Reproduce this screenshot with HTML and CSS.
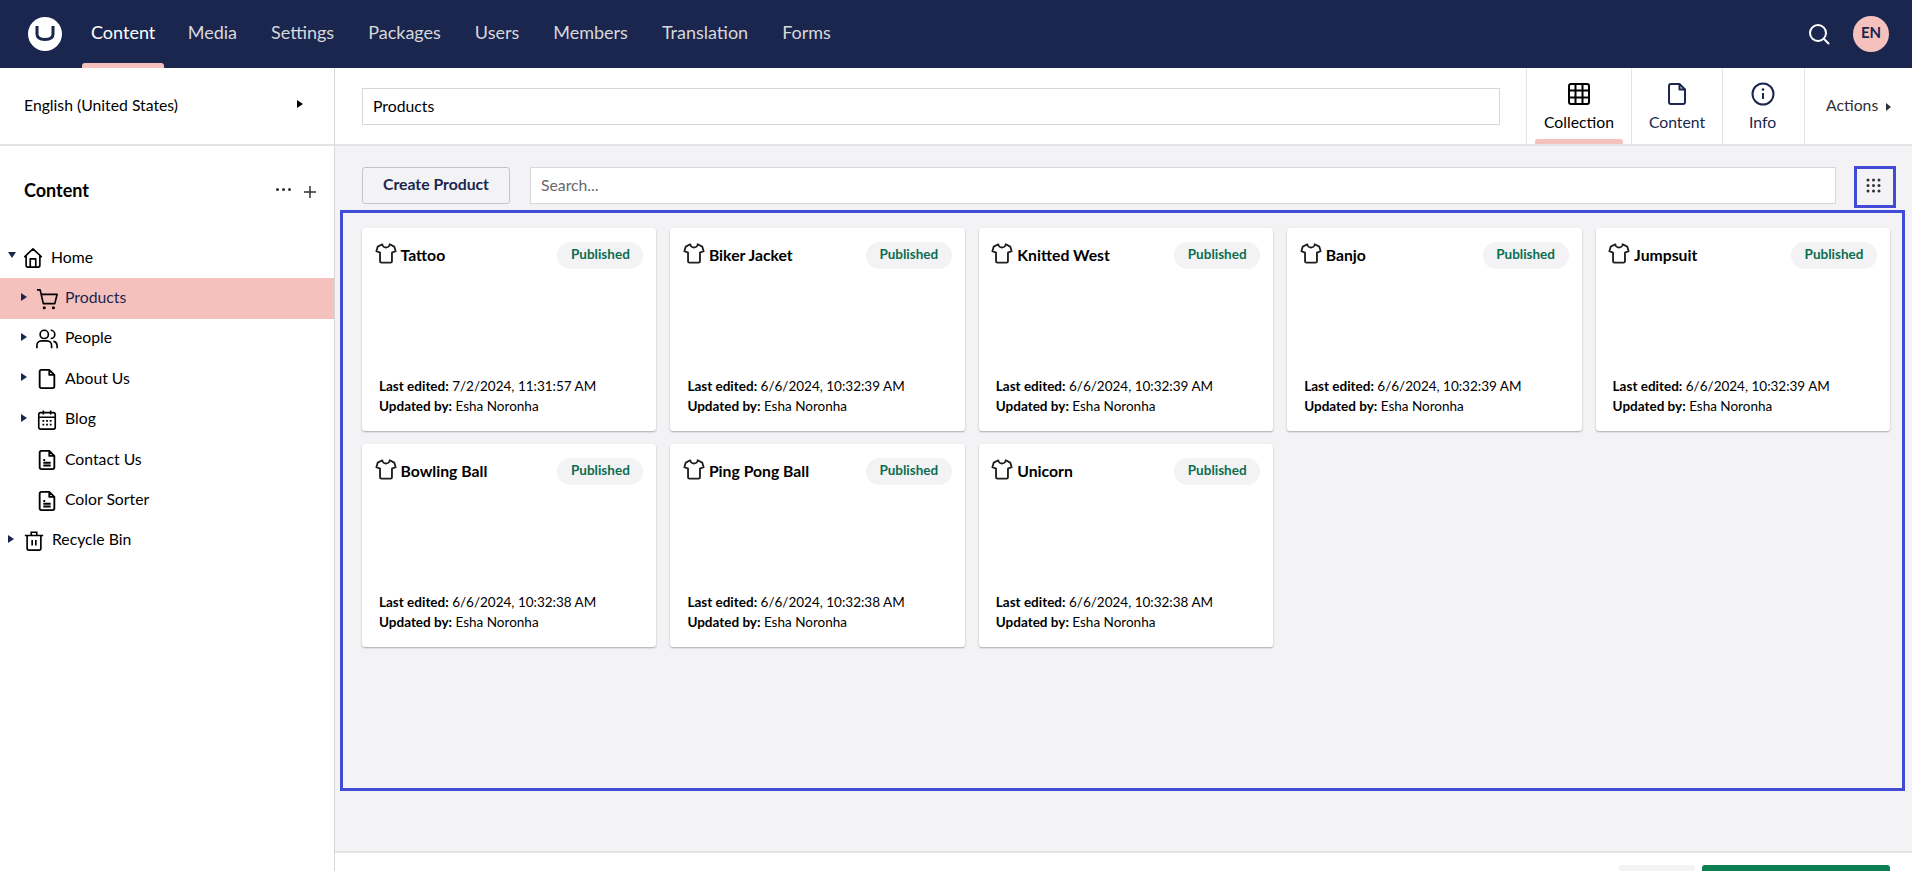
FILE: index.html
```html
<!DOCTYPE html>
<html>

  <head>
    <meta charset="UTF-8">
    <title>Content - Products</title>
    <link rel="stylesheet" href="styles.css">
  </head>

  <body>
    <svg class="defs" width="0" height="0">
      <symbol id="shirt" viewBox="0 0 24 24">
        <path d="M8 2.500 3 5 1.500 10l4 1.500V21a1.500 1.500 0 0 0 1.500 1.500h10a1.500 1.500 0 0 0 1.500-1.500v-9.500l4-1.500L21 5l-5-2.500c0 2-2 3.500-4 3.500S8 4.500 8 2.500Z" fill="none" stroke="currentColor" stroke-width="2" stroke-linejoin="round"/>
      </symbol>
      <symbol id="doc" viewBox="0 0 24 24">
        <path d="M14.500 2H6a2 2 0 0 0-2 2v16a2 2 0 0 0 2 2h12a2 2 0 0 0 2-2V7.500Z M14.500 2v5.500H20" fill="none" stroke="currentColor" stroke-width="2" stroke-linejoin="round"/>
      </symbol>
      <symbol id="doc-lines" viewBox="0 0 24 24">
        <path d="M14.500 2H6a2 2 0 0 0-2 2v16a2 2 0 0 0 2 2h12a2 2 0 0 0 2-2V7.500Z M14.500 2v5.500H20 M8 12h2 M8 15h8 M8 18h8" fill="none" stroke="currentColor" stroke-width="2" stroke-linejoin="round"/>
      </symbol>
    </svg>

    <header class="topbar">
      <div class="logo"><svg width="20" height="15" viewBox="0 0 20 15"><path d="M2 0v8c0 4 3 5.500 8 5.500s8-1.500 8-5.500V0" fill="none" stroke="#1b264f" stroke-width="3"/></svg></div>
      <nav class="topnav">
        <a class="active">Content</a>
        <a>Media</a>
        <a>Settings</a>
        <a>Packages</a>
        <a>Users</a>
        <a>Members</a>
        <a>Translation</a>
        <a>Forms</a>
      </nav>
      <svg class="search-icon" width="24" height="24" viewBox="0 0 24 24"><circle cx="11" cy="11" r="8" fill="none" stroke="#fff" stroke-width="2"/><path d="m17 17 4.500 4.500" stroke="#fff" stroke-width="2" stroke-linecap="round"/></svg>
      <div class="avatar">EN</div>
    </header>

    <div class="layout">
      <aside class="sidebar">
        <div class="lang">
          <span>English (United States)</span>
          <i class="caret dark"></i>
        </div>
        <div class="sidebar-head">
          <h3>Content</h3>
          <span class="dots"><b></b><b></b><b></b></span>
          <svg class="plus" width="12" height="12" viewBox="0 0 12 12"><path d="M6 0v12M0 6h12" stroke="#303033" stroke-width="1.500"/></svg>
        </div>
        <ul class="tree">
          <li class="lvl0"><i class="caret down"></i>
            <svg class="ico" viewBox="0 0 24 24"><path d="M2.500 11 12 2l9.500 9M4.500 9.500V20a2 2 0 0 0 2 2h11a2 2 0 0 0 2-2V9.500M9 22v-9h6v9" fill="none" stroke="currentColor" stroke-width="1.800" stroke-linejoin="round"/></svg>
            Home</li>
          <li class="lvl1 selected"><i class="caret"></i>
            <svg class="ico" viewBox="0 0 24 24"><path d="M1 2h3.500l3.500 15h12.500L23 7H5.500" fill="none" stroke="currentColor" stroke-width="1.800" stroke-linejoin="round"/><circle cx="9" cy="21.500" r="1.700"/><circle cx="19" cy="21.500" r="1.700"/></svg>
            Products</li>
          <li class="lvl1"><i class="caret"></i>
            <svg class="ico" viewBox="0 0 24 24"><circle cx="9" cy="7" r="4.500" fill="none" stroke="currentColor" stroke-width="1.800"/><path d="M1 22v-3a5 5 0 0 1 5-5h6a5 5 0 0 1 5 5v3M16 2.500a4.500 4.500 0 0 1 0 9M19 14.500a5 5 0 0 1 4 4.500v3" fill="none" stroke="currentColor" stroke-width="1.800"/></svg>
            People</li>
          <li class="lvl1"><i class="caret"></i>
            <svg class="ico"><use href="#doc"/></svg>
            About Us</li>
          <li class="lvl1"><i class="caret"></i>
            <svg class="ico" viewBox="0 0 24 24"><rect x="3" y="4" width="18" height="18" rx="2" fill="none" stroke="currentColor" stroke-width="1.800"/><path d="M3 9h18M8 1.500V6M16 1.500V6M7 13h2M11 13h2M15 13h2M7 17h2M11 17h2M15 17h2" fill="none" stroke="currentColor" stroke-width="1.800"/></svg>
            Blog</li>
          <li class="lvl1"><i class="caret none"></i>
            <svg class="ico"><use href="#doc-lines"/></svg>
            Contact Us</li>
          <li class="lvl1"><i class="caret none"></i>
            <svg class="ico"><use href="#doc-lines"/></svg>
            Color Sorter</li>
          <li class="lvl0"><i class="caret"></i>
            <svg class="ico" viewBox="0 0 24 24"><path d="M2 6h20M9 6V2.500h6V6M4.500 6v14a2 2 0 0 0 2 2h11a2 2 0 0 0 2-2V6M10 11v6M14 11v6" fill="none" stroke="currentColor" stroke-width="1.800"/></svg>
            Recycle Bin</li>
        </ul>
      </aside>

      <main class="main">
        <div class="editor-head">
          <div class="name-wrap"><input class="name-input" value="Products"></div>
          <a class="tab current">
            <svg viewBox="0 0 24 24"><rect x="2" y="2" width="20" height="20" rx="2" fill="none" stroke="#000" stroke-width="2"/><path d="M2 8.500h20M2 15.500h20M8.500 2v20M15.500 2v20" stroke="#000" stroke-width="2"/></svg>
            <span>Collection</span>
          </a>
          <a class="tab">
            <svg><use href="#doc"/></svg>
            <span>Content</span>
          </a>
          <a class="tab">
            <svg viewBox="0 0 24 24"><circle cx="12" cy="12" r="10.500" fill="none" stroke="currentColor" stroke-width="2"/><path d="M12 11v6" stroke="currentColor" stroke-width="2"/><circle cx="12" cy="7.500" r="1.300" fill="currentColor"/></svg>
            <span>Info</span>
          </a>
          <a class="actions">Actions <i class="caret small"></i></a>
        </div>

        <section class="collection">
          <div class="toolbar">
            <button class="create">Create Product</button>
            <input class="search" placeholder="Search...">
            <div class="view-btn">
              <svg width="15" height="15" viewBox="0 0 15 15" fill="#303033"><circle cx="2" cy="2" r="1.500"/><circle cx="7.500" cy="2" r="1.500"/><circle cx="13" cy="2" r="1.500"/><circle cx="2" cy="7.500" r="1.500"/><circle cx="7.500" cy="7.500" r="1.500"/><circle cx="13" cy="7.500" r="1.500"/><circle cx="2" cy="13" r="1.500"/><circle cx="7.500" cy="13" r="1.500"/><circle cx="13" cy="13" r="1.500"/></svg>
            </div>
          </div>

          <div class="cards">
            <div class="card">
              <div class="card-top"><svg class="shirt"><use href="#shirt"/></svg><strong>Tattoo</strong><span class="tag">Published</span></div>
              <p><b>Last edited:</b> 7/2/2024, 11:31:57 AM<br><b>Updated by:</b> Esha Noronha</p>
            </div>
            <div class="card">
              <div class="card-top"><svg class="shirt"><use href="#shirt"/></svg><strong>Biker Jacket</strong><span class="tag">Published</span></div>
              <p><b>Last edited:</b> 6/6/2024, 10:32:39 AM<br><b>Updated by:</b> Esha Noronha</p>
            </div>
            <div class="card">
              <div class="card-top"><svg class="shirt"><use href="#shirt"/></svg><strong>Knitted West</strong><span class="tag">Published</span></div>
              <p><b>Last edited:</b> 6/6/2024, 10:32:39 AM<br><b>Updated by:</b> Esha Noronha</p>
            </div>
            <div class="card">
              <div class="card-top"><svg class="shirt"><use href="#shirt"/></svg><strong>Banjo</strong><span class="tag">Published</span></div>
              <p><b>Last edited:</b> 6/6/2024, 10:32:39 AM<br><b>Updated by:</b> Esha Noronha</p>
            </div>
            <div class="card">
              <div class="card-top"><svg class="shirt"><use href="#shirt"/></svg><strong>Jumpsuit</strong><span class="tag">Published</span></div>
              <p><b>Last edited:</b> 6/6/2024, 10:32:39 AM<br><b>Updated by:</b> Esha Noronha</p>
            </div>
            <div class="card">
              <div class="card-top"><svg class="shirt"><use href="#shirt"/></svg><strong>Bowling Ball</strong><span class="tag">Published</span></div>
              <p><b>Last edited:</b> 6/6/2024, 10:32:38 AM<br><b>Updated by:</b> Esha Noronha</p>
            </div>
            <div class="card">
              <div class="card-top"><svg class="shirt"><use href="#shirt"/></svg><strong>Ping Pong Ball</strong><span class="tag">Published</span></div>
              <p><b>Last edited:</b> 6/6/2024, 10:32:38 AM<br><b>Updated by:</b> Esha Noronha</p>
            </div>
            <div class="card">
              <div class="card-top"><svg class="shirt"><use href="#shirt"/></svg><strong>Unicorn</strong><span class="tag">Published</span></div>
              <p><b>Last edited:</b> 6/6/2024, 10:32:38 AM<br><b>Updated by:</b> Esha Noronha</p>
            </div>
          </div>

          <!-- annotation boxes drawn over the page -->
          <div class="mark mark-view"></div>
          <div class="mark mark-cards"></div>
        </section>

        <footer class="footer">
          <span class="btn-grey"></span>
          <span class="btn-green"></span>
        </footer>
      </main>
    </div>
  </body>

</html>
```

FILE: styles.css
```css
* {
  box-sizing: border-box;
}

html, body {
  height: 100%;
}

body {
  margin: 0;
  overflow: hidden;
  display: flex;
  flex-direction: column;
  font-family: Lato, "Open Sans", sans-serif;
  font-size: 15.75px;
  color: #1b264f;
  background: #fff;
}

.defs {
  position: absolute;
}

/* top bar */
.topbar {
  height: 68px;
  flex: none;
  display: flex;
  align-items: center;
  padding: 0 23px 0 28px;
  background: #1b264f;
}

.logo {
  width: 34px;
  height: 34px;
  margin-top: -1px;
  border-radius: 50%;
  background: #fff;
  display: flex;
  align-items: center;
  justify-content: center;
}

.topnav {
  display: flex;
  height: 68px;
  margin-left: 20px;
  flex: 1;
}

.topnav a {
  position: relative;
  padding: 0 12.500px;
  margin-right: 9px;
  line-height: 64px;
  font-size: 18px;
  color: #d8d7d9;
}

.topnav a.active {
  color: #fff;
  margin-right: 11px;
  padding: 0 9px;
  min-width: 81px;
  text-align: center;
}

.topnav a.active::after {
  content: "";
  position: absolute;
  left: 0;
  right: 0;
  bottom: 0;
  height: 5px;
  border-radius: 3px 3px 0 0;
  background: #f5c1bc;
}

.search-icon {
  margin-right: 22px;
}

.avatar {
  width: 36px;
  height: 36px;
  border-radius: 50%;
  background: #f5c1bc;
  font-size: 15px;
  font-weight: 700;
  line-height: 33px;
  text-align: center;
}

/* page below the top bar */
.layout {
  flex: 1;
  display: flex;
  min-height: 0;
}

.sidebar {
  width: 335px;
  flex: none;
  border-right: 1px solid #d8d7d9;
}

.lang {
  height: 78px;
  padding: 0 31px 4px 24px;
  display: flex;
  align-items: center;
  justify-content: space-between;
  border-bottom: 2px solid #e4e4e6;
  color: #000;
}

.sidebar-head {
  display: flex;
  align-items: center;
  height: 92px;
  padding: 0 18px 4px 24px;
  gap: 13px;
}

.sidebar-head h3 {
  margin: 0;
  flex: 1;
  font-size: 18px;
  font-weight: 700;
  color: #000;
}

.dots {
  display: flex;
  gap: 3px;
  margin-top: -2px;
}

.dots b {
  width: 3px;
  height: 3px;
  border-radius: 50%;
  background: #303033;
}

.plus {
  margin-top: 4px;
}

.tree {
  list-style: none;
  margin: 0;
  padding: 0;
}

.tree li {
  height: 40.400px;
  padding-bottom: 4px;
  display: flex;
  align-items: center;
  color: #000;
}

.tree li.lvl0 {
  padding-left: 8px;
}

.tree li.lvl1 {
  padding-left: 21px;
}

.tree li.selected {
  background: #f5c1bc;
  color: #1b264f;
}

.caret {
  width: 0;
  height: 0;
  flex: none;
  margin-right: 9px;
  border-style: solid;
  border-width: 4.500px 0 4.500px 6px;
  border-color: transparent transparent transparent #1b264f;
}

.caret.dark {
  margin: 0;
  border-left-color: #000;
}

.caret.down {
  margin-top: -3px;
  margin-right: 6px;
  border-width: 6px 4.500px 0 4.500px;
  border-color: #1b264f transparent transparent transparent;
}

.caret.none {
  border-color: transparent;
}

.caret.small {
  display: inline-block;
  margin: 0 0 0 4px;
  vertical-align: 0;
  border-width: 4.500px 0 4.500px 5.500px;
  border-left-color: #303033;
}

.ico {
  width: 22px;
  height: 22px;
  flex: none;
  margin-top: 4px;
  margin-right: 7px;
  color: #000;
  fill: #000;
}

/* main column */
.main {
  flex: 1;
  min-width: 0;
  display: flex;
  flex-direction: column;
  background: #f3f3f5;
}

.editor-head {
  height: 78px;
  flex: none;
  display: flex;
  background: #fff;
  border-bottom: 2px solid #e4e4e6;
}

.name-wrap {
  flex: 1;
  padding: 20px 26px 0 27px;
}

.name-input {
  width: 100%;
  height: 37px;
  padding: 0 10px 2px;
  border: 1px solid #d8d7d9;
  font: inherit;
  color: #000;
  outline: none;
}

.tab {
  width: 105px;
  border-left: 1px solid #e4e4e6;
  position: relative;
  display: flex;
  flex-direction: column;
  align-items: center;
  padding-top: 14px;
  color: #1b264f;
}

.tab:nth-of-type(2) {
  width: 91px;
}

.tab:nth-of-type(3) {
  width: 82px;
  padding-right: 2px;
}

.tab svg {
  width: 24px;
  height: 24px;
}

.tab span {
  margin-top: 6px;
  line-height: 20px;
}

.tab.current span {
  color: #000;
}

.tab.current::after {
  content: "";
  position: absolute;
  left: 8px;
  right: 8px;
  bottom: 0;
  height: 5px;
  border-radius: 3px 3px 0 0;
  background: #f5c1bc;
}

.actions {
  width: 108px;
  border-left: 1px solid #e4e4e6;
  padding-left: 21px;
  line-height: 74px;
  color: #303033;
}

/* collection view */
.collection {
  position: relative;
  flex: 1;
  padding: 21px 22px 0 27px;
}

.toolbar {
  display: flex;
  align-items: center;
  height: 37px;
}

.create {
  width: 148px;
  height: 37px;
  flex: none;
  padding: 0 0 4px;
  font: inherit;
  font-weight: 700;
  color: #1b264f;
  background: #f3f3f5;
  border: 1px solid #c4c4c4;
  border-radius: 3px;
}

.search {
  flex: 1;
  height: 37px;
  margin-left: 20px;
  padding: 0 10px 2px;
  border: 1px solid #d8d7d9;
  font: inherit;
  outline: none;
}

.search::placeholder {
  color: #68676b;
}

.view-btn {
  width: 54px;
  flex: none;
  display: flex;
  justify-content: center;
  padding-left: 20px;
}

.cards {
  display: grid;
  grid-template-columns: repeat(5, 1fr);
  grid-auto-rows: 203px;
  gap: 13px 14px;
  margin-top: 24px;
}

.card {
  display: flex;
  flex-direction: column;
  justify-content: space-between;
  padding: 15px 16px 15px 17px;
  background: #fff;
  border-radius: 3px;
  box-shadow: 0 1px 2px rgba(0, 0, 0, 0.3);
}

.card-top {
  display: flex;
  align-items: flex-start;
  margin-left: -3px;
}

.card-top strong {
  flex: 1;
  margin-left: 4px;
  font-size: 15.75px;
  line-height: 24px;
  color: #000;
}

.shirt {
  width: 22px;
  height: 22px;
  margin: -1px 0 0 -1.500px;
  color: #1e1e1e;
}

.tag {
  width: 86px;
  height: 27px;
  margin-top: -1px;
  margin-right: -3px;
  border-radius: 14px;
  background: #f3f3f5;
  color: #0b6e4f;
  font-size: 13.500px;
  font-weight: 700;
  line-height: 25px;
  text-align: center;
}

.card p {
  margin: 0;
  font-size: 13.500px;
  line-height: 20px;
  color: #000;
}

.mark {
  position: absolute;
  border: 3px solid #424bd6;
  pointer-events: none;
}

.mark-view {
  top: 20px;
  right: 16px;
  width: 42px;
  height: 42px;
}

.mark-cards {
  top: 64px;
  left: 5px;
  right: 7px;
  height: 581px;
}

.footer {
  height: 20px;
  flex: none;
  display: flex;
  justify-content: flex-end;
  gap: 7px;
  padding: 12px 22px 0 0;
  background: #fff;
  border-top: 2px solid #e4e4e6;
}

.btn-grey {
  width: 76px;
  background: #f3f3f5;
  border-radius: 3px 3px 0 0;
}

.btn-green {
  width: 188px;
  background: #0b7f52;
  border-radius: 3px 3px 0 0;
}
```
